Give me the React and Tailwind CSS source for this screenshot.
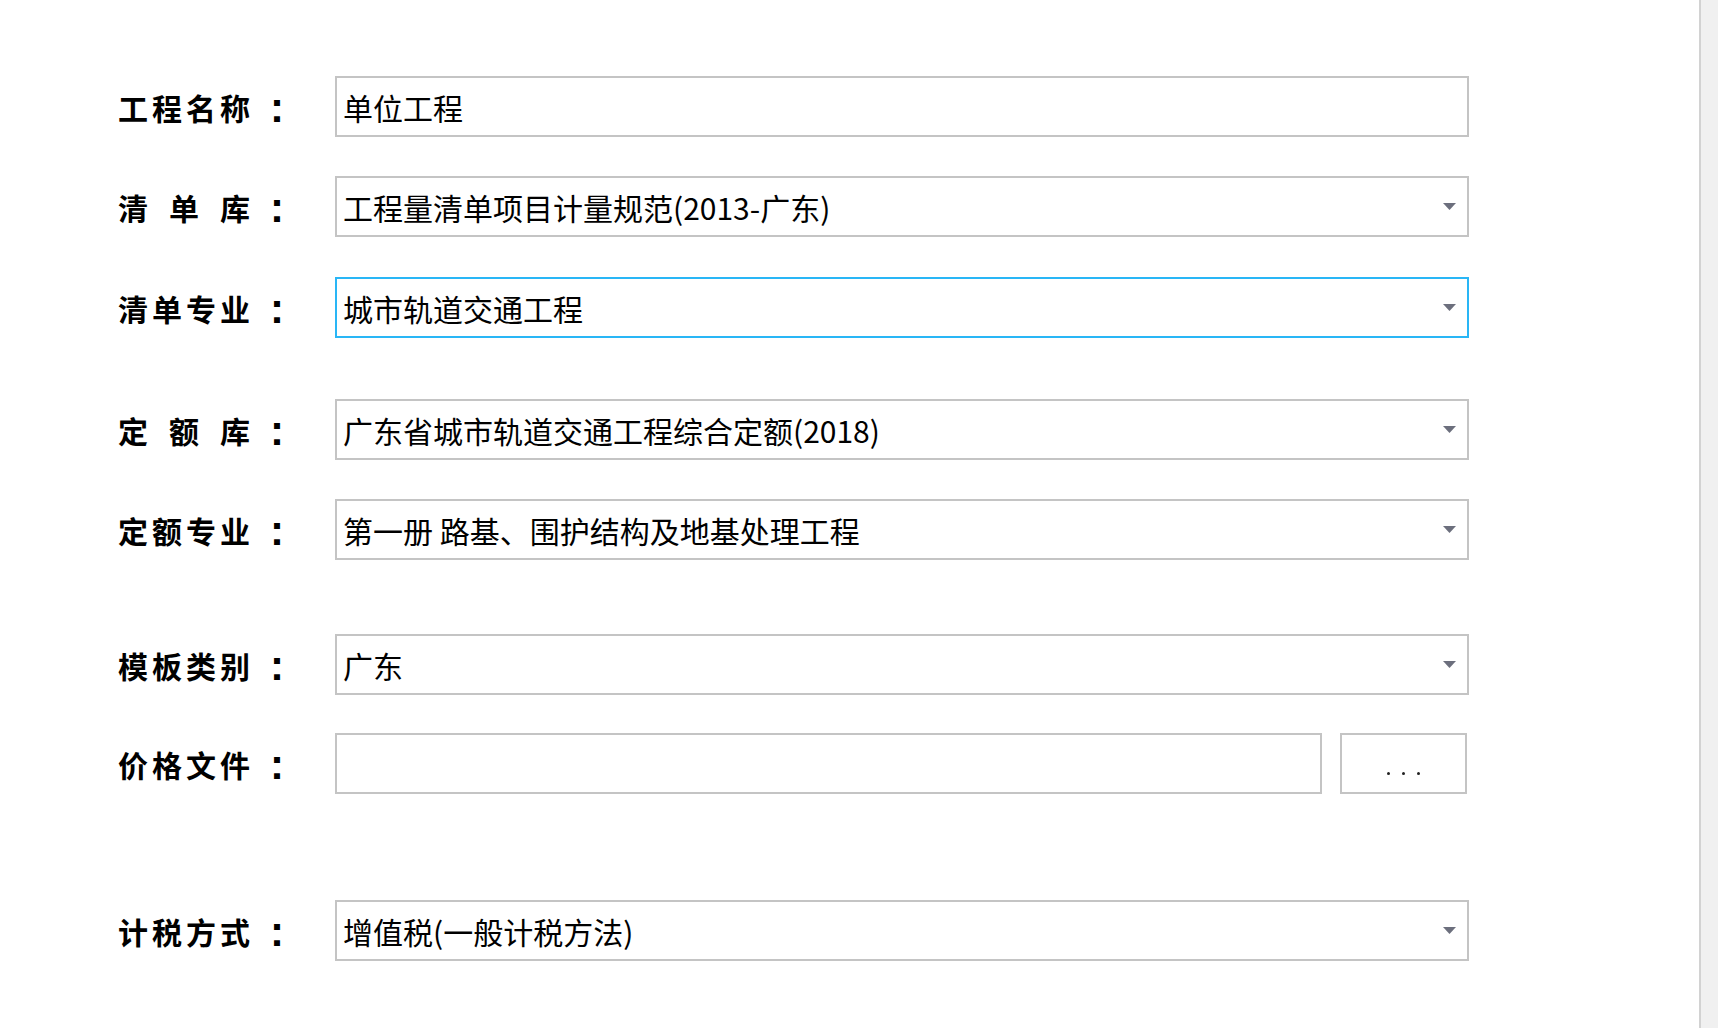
import React from 'react'

const rows = [
  { label: ['工', '程', '名', '称'], value: '单位工程', kind: 'input', mt: 'mt-[76px]' },
  { label: ['清', '单', '库'], value: '工程量清单项目计量规范(2013-广东)', kind: 'select', mt: 'mt-[39px]' },
  { label: ['清', '单', '专', '业'], value: '城市轨道交通工程', kind: 'select', mt: 'mt-[40px]', focused: true },
  { label: ['定', '额', '库'], value: '广东省城市轨道交通工程综合定额(2018)', kind: 'select', mt: 'mt-[61px]' },
  { label: ['定', '额', '专', '业'], value: '第一册 路基、围护结构及地基处理工程', kind: 'select', mt: 'mt-[39px]' },
  { label: ['模', '板', '类', '别'], value: '广东', kind: 'select', mt: 'mt-[74px]' },
  { label: ['价', '格', '文', '件'], value: '', kind: 'file', mt: 'mt-[38px]' },
  { label: ['计', '税', '方', '式'], value: '增值税(一般计税方法)', kind: 'select', mt: 'mt-[106px]' },
]

function Arrow() {
  return (
    <svg width="13" height="7" viewBox="0 0 13 7" className="shrink-0">
      <path d="M0 0 H13 L6.5 7 Z" fill="#6c6f7d" />
    </svg>
  )
}

function Field({ row }) {
  const border = row.focused ? 'border-[#29b6f6]' : 'border-[#c4c4c4]'

  if (row.kind === 'file') {
    return (
      <div className="flex items-center">
        <div className="h-[61px] w-[987px] border-2 border-[#c4c4c4] bg-white" />
        <button className="ml-[18px] h-[61px] w-[127px] border-2 border-[#c4c4c4] bg-white flex items-end justify-center pb-[17px] gap-[12px]">
          <span className="w-[3px] h-[3px] rounded-full bg-[#222]" />
          <span className="w-[3px] h-[3px] rounded-full bg-[#222]" />
          <span className="w-[3px] h-[3px] rounded-full bg-[#222]" />
        </button>
      </div>
    )
  }

  return (
    <div className={`h-[61px] w-[1134px] border-2 ${border} bg-white flex items-center pl-[6px] pr-[11px]`}>
      <span className="flex-1 text-[30px] leading-none text-black whitespace-nowrap">{row.value}</span>
      {row.kind === 'select' && <Arrow />}
    </div>
  )
}

export default function App() {
  return (
    <div
      className="h-[1028px] w-full flex bg-white overflow-hidden"
      style={{ fontFamily: '"Noto Sans CJK SC", "Noto Sans", sans-serif' }}
    >
      <div className="flex-1 flex flex-col">
        {rows.map((row, i) => (
          <div key={i} className={`${row.mt} flex items-center pl-[118px]`}>
            <div className="w-[132px] flex justify-between text-[30px] font-bold leading-none text-black">
              {row.label.map((c, j) => (
                <span key={j}>{c}</span>
              ))}
            </div>
            <span
              className="ml-[15px] w-[24px] text-center text-[42px] font-bold leading-none text-black mt-[2px]"
              style={{ fontFamily: '"Liberation Sans", sans-serif' }}
            >
              :
            </span>
            <div className="ml-[46px]">
              <Field row={row} />
            </div>
          </div>
        ))}
      </div>
      <div className="w-[19px] border-l-2 border-[#d2d2d2] bg-[#f0f0f0]" />
    </div>
  )
}
